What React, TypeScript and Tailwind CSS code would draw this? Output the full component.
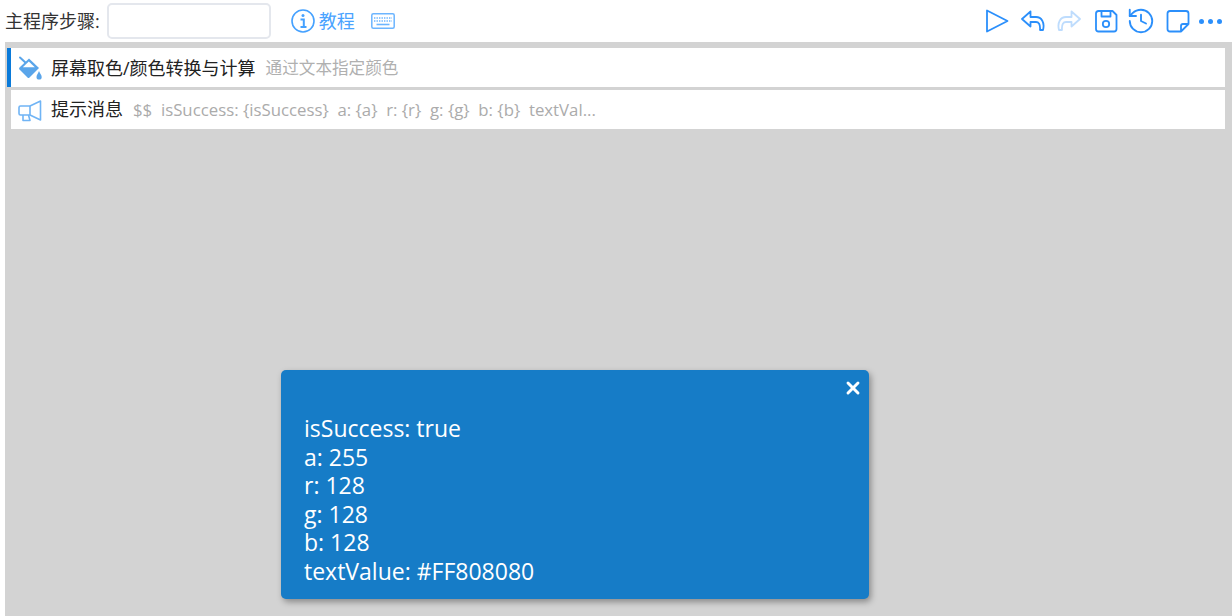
import { History, X } from 'lucide-react'

const FONT = "font-['Open_Sans','Noto_Sans_CJK_SC',sans-serif]"

const TOAST_LINES = ['isSuccess: true', 'a: 255', 'r: 128', 'g: 128', 'b: 128', 'textValue: #FF808080']

const ARROW = 'M9.5 2.5 L1 10 L9.5 17.5 V13 H15 C17.5 13 19.5 15 19 21 H22 C24 13.5 20.5 8 15 8 H9.5 Z'

function BucketIcon() {
  return (
    <svg viewBox="0 0 24 24" className="h-6 w-6 shrink-0">
      <path d="M2 1.5 L9 8" stroke="#5aa5ea" strokeWidth="2" strokeLinecap="round" />
      <path d="M11 2.5 L21 12 L11.5 21.5 Q10.5 22.5 9.5 21.5 L1.5 13.5 Q0.5 12.5 1.5 11.5 Z" fill="#5aa5ea" />
      <path d="M10.8 5.5 L16.8 11.2 L4.8 11.2 Z" fill="#ffffff" />
      <path d="M21 15 C20 17.5 18.5 19 18.5 21 A2.6 2.6 0 0 0 23.7 21 C23.7 19 22 17.5 21 15 Z" fill="#5aa5ea" />
    </svg>
  )
}

function HornIcon() {
  return (
    <svg viewBox="0 0 24 24" fill="none" stroke="#70b4f5" strokeWidth="1.6" strokeLinejoin="round" className="h-6 w-6 shrink-0">
      <path d="M2.5 8 H12 V17 H2.5 Q1 17 1 15.5 V9.5 Q1 8 2.5 8 Z" />
      <path d="M12 8 L22.5 3 V22 L12 17" />
      <path d="M5 17 V22.5 H12 L10.5 17" />
    </svg>
  )
}

function InfoIcon() {
  return (
    <svg viewBox="0 0 24 24" fill="none" stroke="#45a1ff" className="h-6 w-6 shrink-0">
      <circle cx="12" cy="12" r="11" strokeWidth="1.6" />
      <circle cx="12" cy="6.5" r="1.5" fill="#45a1ff" stroke="none" />
      <path d="M9.5 10.5 H12.8 V17.5 M9.5 18 H15.5" strokeWidth="2" />
    </svg>
  )
}

function KeyboardIcon() {
  return (
    <svg viewBox="0 0 24 16" fill="none" stroke="#6cb5ff" className="h-4 w-6 shrink-0">
      <rect x="0.8" y="0.8" width="22.4" height="14.4" rx="1.5" strokeWidth="1.5" />
      <path d="M3 5 H21 M3 8 H21" strokeWidth="1.4" strokeDasharray="1.4 1.1" />
      <path d="M5.5 11.5 H18.5" strokeWidth="1.6" />
    </svg>
  )
}

function ToolIcon({ d, className = '' }: { d: string; className?: string }) {
  return (
    <svg viewBox="0 0 24 24" fill="none" stroke="#2b8ffb" strokeWidth="1.8" strokeLinejoin="round" strokeLinecap="round" className={`h-6 w-6 shrink-0 ${className}`}>
      <path d={d} />
    </svg>
  )
}

function SaveIcon({ className = '' }: { className?: string }) {
  return (
    <svg viewBox="0 0 24 24" fill="none" stroke="#2b8ffb" strokeWidth="1.8" strokeLinejoin="round" className={`h-6 w-6 shrink-0 ${className}`}>
      <path d="M4.5 2 H18.5 L22.5 6 V20 Q22.5 22.5 20 22.5 H4.5 Q2 22.5 2 20 V4.5 Q2 2 4.5 2 Z" />
      <path d="M7.5 2 V7.5 H16.5 V2" />
      <circle cx="12" cy="15" r="3.2" />
    </svg>
  )
}

export default function App() {
  return (
    <div className={`${FONT} relative flex h-[616px] w-[1232px] flex-col overflow-hidden bg-white`}>
      {/* Toolbar */}
      <header className="flex h-[42px] items-center pl-[5px] pr-[10px]">
        <span className="pt-[1px] text-[18px] text-[#333]">主程序步骤:</span>
        <input className="ml-[7px] h-[36px] w-[164px] rounded-[5px] border-2 border-[#e4e7ed] bg-white" />
        <div className="ml-[20px]">
          <InfoIcon />
        </div>
        <span className="ml-[4px] pt-[1px] text-[18px] text-[#4aa3ff]">教程</span>
        <div className="ml-[16px]">
          <KeyboardIcon />
        </div>
        <div className="ml-auto flex items-center">
          <ToolIcon d="M1 1.5 V22.5 L21.5 12 Z" />
          <ToolIcon d={ARROW} className="ml-[11px]" />
          <ToolIcon d={ARROW} className="ml-[12px] -scale-x-100 opacity-30" />
          <SaveIcon className="ml-[13px]" />
          <History className="ml-[8px] h-[30px] w-[30px] text-[#2b8ffb]" strokeWidth={1.5} />
          <ToolIcon d="M4 2 H20 Q22.5 2 22.5 4.5 V15 L15 22.5 H4 Q1.5 22.5 1.5 20 V4.5 Q1.5 2 4 2 Z M22.5 15 H17 Q15 15 15 17 V22.5" className="ml-[10px]" />
          <div className="ml-[9px] flex gap-[4px]">
            <span className="h-[5px] w-[5px] rounded-full bg-[#2b8ffb]" />
            <span className="h-[5px] w-[5px] rounded-full bg-[#2b8ffb]" />
            <span className="h-[5px] w-[5px] rounded-full bg-[#2b8ffb]" />
          </div>
        </div>
      </header>

      {/* Steps */}
      <main className="ml-[5px] flex flex-1 flex-col gap-[3px] bg-[#d3d3d3] pl-[2px] pr-[7px] pt-[6px]">
        <div className="flex h-[39px] items-center border-l-4 border-[#0a7ad9] bg-white pl-[7px]">
          <BucketIcon />
          <span className="ml-[9px] pt-[1px] text-[18px] text-[#222]">屏幕取色/颜色转换与计算</span>
          <span className="ml-[10px] pt-[1px] text-[16.6px] text-[#b0b0b0]">通过文本指定颜色</span>
        </div>
        <div className="ml-[4px] flex h-[39px] items-center bg-white pl-[7px]">
          <HornIcon />
          <span className="ml-[9px] text-[18px] text-[#222]">提示消息</span>
          <span className="ml-[10px] whitespace-pre text-[16.8px] text-[#ababab]">
            $$  isSuccess: {'{isSuccess}'}  a: {'{a}'}  r: {'{r}'}  g: {'{g}'}  b: {'{b}'}  textVal...
          </span>
        </div>
      </main>

      {/* Toast */}
      <div className="absolute left-[281px] top-[370px] h-[229px] w-[588px] rounded-[5px] bg-[#167cc7] pl-[23px] pt-[44px] text-white shadow-[2px_3px_6px_rgba(0,0,0,0.35)]">
        <X className="absolute right-[6px] top-[8px] h-[20px] w-[20px]" strokeWidth={3.5} />
        {TOAST_LINES.map((line) => (
          <div key={line} className="text-[23px] leading-[28.6px]">
            {line}
          </div>
        ))}
      </div>
    </div>
  )
}
